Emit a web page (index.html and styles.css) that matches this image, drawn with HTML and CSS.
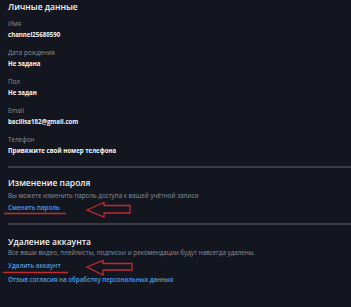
FILE: index.html
```html
<!DOCTYPE html>
<html lang="ru">
<head>
<meta charset="utf-8">
<link rel="stylesheet" href="styles.css">
</head>
<body>
<main class="page">
  <section class="section">
    <h2 class="title title1">Личные данные</h2>
    <div class="field"><div class="label">Имя</div><div class="value">channel25680590</div></div>
    <div class="field"><div class="label">Дата рождения</div><div class="value">Не задана</div></div>
    <div class="field"><div class="label">Пол</div><div class="value">Не задан</div></div>
    <div class="field"><div class="label">Email</div><div class="value">bacilisa182@gmail.com</div></div>
    <div class="field"><div class="label">Телефон</div><div class="value">Привяжите свой номер телефона</div></div>
  </section>
  <hr class="sep sep1">
  <section class="section">
    <h2 class="title">Изменение пароля</h2>
    <div class="desc desc2">Вы можете изменить пароль доступа к вашей учётной записи</div>
    <a class="link link-pass">Сменить пароль</a>
  </section>
  <hr class="sep sep2">
  <section class="section">
    <h2 class="title">Удаление аккаунта</h2>
    <div class="desc desc3">Все ваши видео, плейлисты, подписки и рекомендации будут навсегда удалены.</div>
    <a class="link link-del">Удалить аккаунт</a>
    <a class="link link-consent">Отзыв согласия на обработку персональных данных</a>
  </section>
</main>
<svg class="marks" width="351" height="307" viewBox="0 0 351 307">
  <g fill="none" stroke="#c22a2f" stroke-width="1.3" stroke-linejoin="miter">
    <polygon points="87,210 104,202.5 104,205.5 130,205.5 130,213 104,213 104,217"/>
    <polygon points="87,267 103,260.5 103,263.5 132,263.5 132,270 103,270 103,275"/>
  </g>
  <g stroke="#c22a2f" stroke-width="1.6">
    <line x1="4" y1="213.5" x2="66" y2="213.5"/>
    <line x1="3" y1="272.5" x2="68" y2="272.5"/>
  </g>
</svg>
</body>
</html>
```
FILE: styles.css
```css
html, body {
  margin: 0;
  padding: 0;
  background: #13161f;
  width: 351px;
  height: 307px;
  overflow: hidden;
}
body {
  position: relative;
  font-family: "Open Sans", "Liberation Sans", sans-serif;
  color: #ffffff;
}
.page {
  display: flex;
  flex-direction: column;
  padding-left: 8px;
}
.section {
  display: flex;
  flex-direction: column;
}
.title {
  margin: 0;
  font-size: 8.5px;
  line-height: 12px;
  font-weight: 600;
  color: #f2f3f5;
}
.title1 {
  margin-top: 1px;
  margin-bottom: 5px;
}
.field {
  display: flex;
  flex-direction: column;
  margin-bottom: 6.9px;
}
.label {
  font-size: 6.3px;
  line-height: 11px;
  color: #8b8f98;
}
.value {
  font-size: 6.1px;
  line-height: 11px;
  font-weight: 700;
  color: #f5f5f7;
  white-space: nowrap;
}
.sep {
  border: 0;
  height: 1.5px;
  background: #3a3d46;
  margin: 0;
}
.sep1 {
  margin: 3.75px 0 9.25px 0;
}
.sep2 {
  margin: 9.75px 0 11.25px 0;
}
.desc {
  font-size: 6.27px;
  line-height: 11px;
  color: #8b8f98;
  white-space: nowrap;
}
.desc2 {
  margin-top: 1.5px;
}
.desc3 {
  margin-top: -0.5px;
}
.link {
  font-size: 6.2px;
  line-height: 11px;
  font-weight: 600;
  color: #4f9ee6;
  white-space: nowrap;
}
.link-pass {
  margin-top: 1px;
}
.link-del {
  margin-top: 2px;
}
.link-consent {
  margin-top: 3px;
}
.marks {
  position: absolute;
  left: 0;
  top: 0;
  pointer-events: none;
}
```
